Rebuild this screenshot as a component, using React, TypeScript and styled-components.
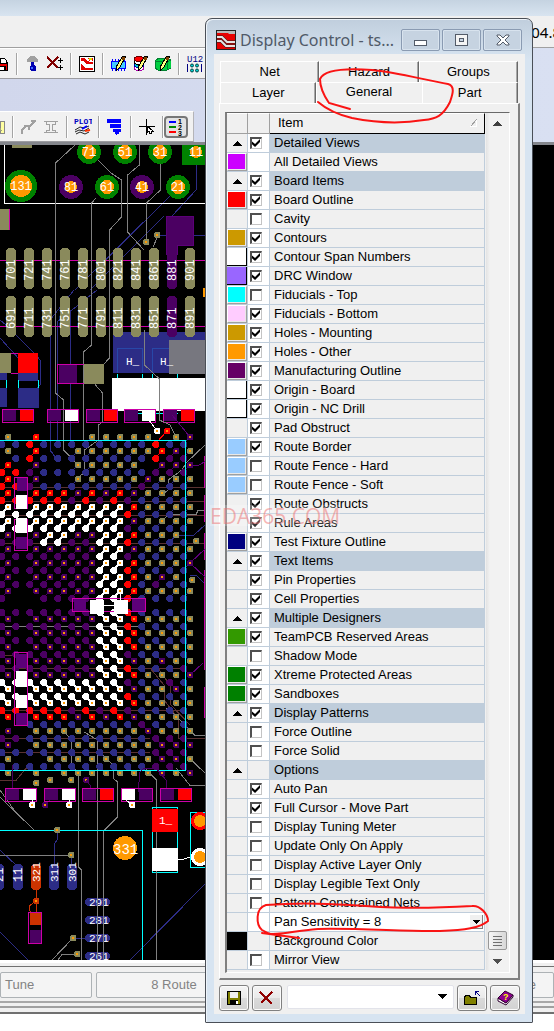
import React from "react";
import styled, { createGlobalStyle, css } from "styled-components";

const Global = createGlobalStyle`
  * { box-sizing: border-box; }
  body { margin: 0; background: #fff; font: 13px/16px "Liberation Sans", Arial, sans-serif; color: #000; overflow-x: hidden; }
  button, select, input { font: inherit; color: inherit; margin: 0; padding: 0; }
`;

const Desktop = styled.div`
  position: relative;
  overflow: hidden;
  padding-bottom: 18px;
`;

/* ---------- main application behind the dialog ---------- */
const AppTitle = styled.div`
  height: 16px;
  background: linear-gradient(#c5d3e1, #d8e4f0);
`;
const MenuBar = styled.div`
  height: 32px;
  display: flex;
  align-items: center;
  justify-content: flex-end;
  background: #f0f0f0;
  border-bottom: 1px solid #a0a0a0;
  font: 15px/20px "Noto Sans", sans-serif;
`;
const MenuText = styled.span`
  margin-right: -7px;
`;
const Dock = styled.div`
  background: linear-gradient(90deg, #d1d7ec, #d9e0f2);
  border-bottom: 3px solid #84868c;
`;
const Toolbar = styled.div<{ $w: number; $h: number }>`
  display: flex;
  align-items: center;
  width: ${(p) => p.$w}px;
  height: ${(p) => p.$h}px;
  background: #f1f1f1;
  border-top: 1px solid #fff;
  border-bottom: 1px solid #9c9ca0;
  border-right: 1px solid #b4b4b8;
`;
const DockGap = styled.div`
  height: 32px;
`;
const Group = styled.div<{ $first?: number; $flush?: boolean }>`
  display: flex;
  align-items: center;
  gap: 6px;
  padding: 0 ${(p) => (p.$first || p.$flush ? 0 : 7)}px;
  ${(p) => p.$first && css`width: ${p.$first}px;`}
  flex: none;
`;
const Sep = styled.span`
  flex: none;
  width: 2px;
  height: 22px;
  background: #a4a4a4;
  border-right: 1px solid #fff;
`;
const Tool = styled.button<{ $on?: boolean }>`
  flex: none;
  display: flex;
  align-items: center;
  justify-content: center;
  width: ${(p) => (p.$on ? 24 : 16)}px;
  height: ${(p) => (p.$on ? 22 : 20)}px;
  border: ${(p) => (p.$on ? "2px solid #777" : "0")};
  border-radius: 4px;
  background: ${(p) => (p.$on ? "#e2e2e2" : "transparent")};
  svg { flex: none; }
`;
const Canvas = styled.main`
  background: #000;
  overflow: hidden;
  svg { display: block; }
`;
const StatusBar = styled.footer`
  border-top: 3px solid #fff;
  background: #f0f0f0;
  padding-top: 3px;
`;
const StatusRow = styled.div`
  display: flex;
  gap: 4px;
  padding: 5px 0 3px;
  border-top: 1px solid #707070;
  border-bottom: 2px solid #a8a8a8;
`;
const StatusButton = styled.button<{ $w?: number; $side?: string }>`
  ${(p) => (p.$w ? css`width: ${p.$w}px; flex: none;` : css`flex: 1;`)}
  height: 26px;
  border: 1px solid #adb2b5;
  border-radius: 2px;
  background: #f4f4f4;
  color: #838383;
  text-align: ${(p) => p.$side || "center"};
  padding: 0 17px 0 4px;
`;
const StatusEdge = styled.div`
  height: 8px;
  margin-top: 3px;
  border-top: 2px solid #a0a0a0;
  border-bottom: 2px solid #707070;
`;

/* ---------- Display Control dialog ---------- */
const Dialog = styled.section`
  position: absolute;
  left: 205px;
  right: 21px;
  top: 18px;
  padding: 0 7px 8px 8px;
  border: 1px solid #4a4f57;
  border-radius: 7px 7px 1px 1px;
  background: linear-gradient(#c0cedd, #d7e4f1 40px, #d7e4f1);
  box-shadow: inset 1px 1px 0 #eef4fa;
`;
const Caption = styled.header`
  display: flex;
  align-items: center;
  gap: 2px;
  height: 35px;
  padding: 7px 3px 0 2px;
`;
const CaptionText = styled.h1`
  flex: 1;
  min-width: 0;
  margin: 0 0 0 2px;
  overflow: hidden;
  white-space: nowrap;
  font: 16px/22px "Noto Sans", sans-serif;
  color: #505a68;
`;
const CaptionButton = styled.button`
  flex: none;
  display: flex;
  align-items: center;
  justify-content: center;
  width: 39px;
  height: 22px;
  border: 1px solid #8a9bb2;
  border-radius: 2px;
  background: #c6d3e1;
  box-shadow: inset 0 0 0 1px #d8e3ee;
`;
const Client = styled.div`
  padding: 7px 5px 2px;
  background: #f0f0f0;
`;
const TabRow = styled.div`
  display: flex;
  height: 21px;
  padding: 0 2px 0 1px;
`;
const Tab = styled.button<{ $active?: boolean }>`
  flex: ${(p) => (p.$active ? "106 1 0" : "97 1 0")};
  border: 0;
  border-top: 1px solid #fff;
  border-left: 1px solid #fff;
  border-right: 1px solid ${(p) => (p.$active ? "#f0f0f0" : "#696969")};
  box-shadow: ${(p) => (p.$active ? "none" : "inset -1px 0 0 #a8a8a8")};
  background: #f0f0f0;
  line-height: 18px;
  padding-bottom: ${(p) => (p.$active ? 5 : 1)}px;
`;
const Panel = styled.div`
  padding: 8px 8px 5px 5px;
  border-top: 1px solid #fff;
  border-left: 1px solid #fff;
  border-right: 2px solid #808080;
  border-bottom: 2px solid #808080;
`;
const ListFrame = styled.div`
  display: flex;
  justify-content: space-between;
  padding-bottom: 2px;
  border-top: 1px solid #696969;
  border-left: 2px solid #808080;
  border-right: 1px solid #fff;
  border-bottom: 1px solid #fff;
`;
const ItemTable = styled.table`
  flex: 1;
  border-collapse: separate;
  border-spacing: 0;
  table-layout: fixed;
`;
const Head = styled.th<{ $w?: number }>`
  ${(p) => p.$w && css`width: ${p.$w}px;`}
  height: 21px;
  padding: 0 6px 2px 8px;
  text-align: left;
  font-weight: normal;
  background: #f0f0f0;
  border-right: 1px solid ${(p) => (p.$w ? "#a0a0a0" : "#000")};
  border-bottom: 1px solid ${(p) => (p.$w ? "#a0a0a0" : "#000")};
  border-top: 1px solid #fff;
`;
const HeadInner = styled.div`
  display: flex;
  align-items: center;
  justify-content: space-between;
`;
const Cell = styled.td<{ $bg?: string }>`
  height: 19px;
  padding: 0;
  background: ${(p) => p.$bg || "#f0f0f0"};
  border-right: 1px solid #bfcddb;
  border-bottom: 1px solid #bfcddb;
  white-space: nowrap;
  overflow: hidden;
  vertical-align: middle;
`;
const CellLabel = styled.label`
  display: block;
  height: 18px;
  padding-left: 4px;
  line-height: 18px;
`;
const Expander = styled.button`
  display: flex;
  width: 100%;
  height: 18px;
  align-items: center;
  justify-content: center;
  border: 0;
  background: transparent;
`;
const Swatch = styled.button<{ $c: string; $flat?: boolean }>`
  display: block;
  width: 100%;
  height: 18px;
  background: ${(p) => p.$c};
  border: 0 solid;
  ${(p) =>
    p.$flat
      ? css`border-color: #000; border-width: 0 1px 1px 0;`
      : css`border-color: #fff #a0a0a0 #a0a0a0 #fff; border-width: 1px; box-shadow: inset -1px -1px 0 #e8e8e8;`}
`;
const Check = styled.input`
  appearance: none;
  display: block;
  position: relative;
  width: 12px;
  height: 12px;
  margin-left: 2px;
  background: #fff;
  border: 1px solid #c4c4c4;
  border-top: 2px solid #505050;
  border-left: 2px solid #505050;
  &:checked::after {
    content: "";
    display: block;
    width: 8px;
    height: 8px;
    background: #000;
    clip-path: polygon(0 30%, 38% 62%, 100% 0, 100% 38%, 38% 100%, 0 66%);
  }
`;
const PanSelect = styled.select`
  appearance: none;
  flex: 1;
  height: 18px;
  padding-left: 4px;
  border: 0;
  background: transparent;
`;
const PanWrap = styled.div`
  display: flex;
  align-items: center;
`;
const DropMark = styled.span`
  display: flex;
  width: 13px;
  height: 14px;
  margin-right: 1px;
  align-items: center;
  justify-content: center;
  background: #f0f0f0;
  border-right: 1px solid #808080;
  border-bottom: 1px solid #808080;
`;
const Scroll = styled.div`
  display: flex;
  flex-direction: column;
  align-items: center;
  justify-content: space-between;
  width: 23px;
  margin-left: 1px;
  padding: 8px 2px 0 1px;
  background: linear-gradient(90deg, #e3e3e3, #f2f2f2 4px);
`;
const ScrollEnd = styled.div`
  display: flex;
  flex-direction: column;
  align-items: center;
  gap: 9px;
  padding-bottom: 6px;
`;
const Thumb = styled.button`
  display: flex;
  flex-direction: column;
  align-items: center;
  justify-content: center;
  gap: 2px;
  width: 19px;
  height: 19px;
  border: 1px solid #989898;
  border-radius: 2px;
  background: linear-gradient(90deg, #f6f6f6, #d8d8d8);
  i { width: 9px; height: 1px; background: #707070; }
`;
const Footer = styled.div`
  display: flex;
  align-items: center;
  gap: 3px;
  margin-top: 4px;
  height: 28px;
`;
const FootButton = styled.button`
  flex: none;
  display: flex;
  align-items: center;
  justify-content: center;
  width: 30px;
  height: 26px;
  border: 1px solid #808080;
  border-radius: 3px;
  background: linear-gradient(#f4f4f4, #e9e9e9 50%, #dadada 51%, #d2d2d2);
  box-shadow: inset 0 0 0 1px #fbfbfb;
`;
const SchemeWrap = styled.div`
  flex: 1;
  display: flex;
  align-items: center;
  height: 24px;
  margin: 0 0 3px 2px;
  padding-right: 6px;
  border: 1px solid #e2e3ea;
  border-radius: 2px;
  background: #fff;
`;
const SchemeSelect = styled.select`
  appearance: none;
  flex: 1;
  height: 20px;
  border: 0;
  background: transparent;
`;
const Markup = styled.svg`
  position: absolute;
  left: 0;
  top: 0;
  pointer-events: none;
`;
const Watermark = styled.div`
  position: absolute;
  left: 210px;
  top: 505px;
  height: 21px;
  font: 21px/22px "Open Sans", sans-serif;
  color: rgba(238, 110, 110, 0.5);
  background: rgba(255, 255, 255, 0.2);
  pointer-events: none;
`;

/* ---------- PCB drawing ---------- */
const C: Record<string, string> = {
  g: "#8a8a5c", r: "#ff0000", w: "#ffffff", p: "#4b0062", b: "#2c2c86",
};
const ringsTop = [
  "g.r...ggggg.gp", "g.r..ggggggrpg", "r.p..ggggg.ppp", "r.p..gggggpggg",
  "r.rrrprprpgggg", "w.wwwwwwwrgggg", "w.wwwwwwwpgggg", "p.pwwppwwrggg.",
  "p.pppppwwpgggg", "p.pppppwwrgggp", "p.pppppwwrgpg.", "p.pppppwwrgggg",
];
const padsTop = [
  "bbrbbbbbbbbrbb", ".brbbbbbbbbrpp", "rrpbbbbbbbbppp", "rrpbbbbbbbpbbb",
  "rrrrrprprpbbbb", "wwwwwwwwwrbbbb", "wwwwwwwwwpbbbb", "pppwwppwwrbbbb",
  "pppppppwwpbbbb", "pppppppwwrbbbb", "pppppppwwrbpbb", "p..ppppwwrbbbb",
];
const ringsLow = [
  "p.pppppwwrgggg", "p.pppppwwrgggg", "p.pppppwwrgggg", "p.pppppwwpgpgg",
  "p.pppppwwrgggp", "w.wwwwwwwpggpg", "w.wwwwwwwrgggg", "r.rrrprprpgggg",
  "p.ggggggggpggg", "p.gggggggggppp", "g..ggggggggppg", "g.g.gggggggpgp",
];
const padsLow = [
  "pppppppwwrbbbb", "pppppppwwrbbbb", "pppppppwwrbbbb", "pppppppwwpbbbb",
  "pppppppwwrbbbp", "wwwwwwwwwpbbpb", "wwwwwwwwwrbbbb", "rrrrrprprpbbbb",
  "..bbbbbbbbpbbb", "ppbbbbbbbbbppp", "bbbbbbbbbbbppp", "bbbbbbbbbbbppp",
];

const Pad = ({ x, y, c }: { x: number; y: number; c: string }) => (
  <path d={`M${x - 1} ${y - 3}h3l2 2v3l-2 2h-3l-2-2v-3z`} fill={c} />
);
const Via = ({ x, y, c }: { x: number; y: number; c: string }) => (
  <>
    <path d={`M${x - 2} ${y - 3}h4l1 1v4l-1 1h-4l-1-1v-4z`} fill={c} />
    <rect x={x - 1} y={y - 1} width="2" height="2" fill="#ff9900" />
  </>
);
const Matrix = ({ rings, pads, top, dir }: { rings: string[]; pads: string[]; top: number; dir: number }) => (
  <g>
    {rings.map((row, j) =>
      [...row].map((k, i) => {
        const x = 8 + 14 * i;
        const y = top + 14 * j;
        const pk = pads[j][i];
        return (
          <g key={`${i}-${j}`}>
            {pk !== "." && k !== "." && (
              <path d={`M${x} ${y}l-7 ${7 * dir}`} stroke={C[pk]} strokeWidth={pk === "w" ? 2 : 1} />
            )}
            {pk !== "." && <Pad x={x - 7} y={y + 7 * dir} c={C[pk]} />}
            {k !== "." && <Via x={x} y={y} c={C[k]} />}
          </g>
        );
      })
    )}
  </g>
);
const Part = ({ x, y, a, b }: { x: number; y: number; a: string; b: string }) => (
  <g>
    <rect x={x + 1} y={y + 1} width="13" height="11" fill={C[a]} />
    <rect x={x + 18} y={y + 1} width="13" height="11" fill={C[b]} />
    <rect x={x + 0.5} y={y + 0.5} width="31" height="13" fill="none" stroke="#cc00a8" />
  </g>
);
const Pin = ({ x, y, r, c, t, inner }: { x: number; y: number; r: number; c: string; t: string; inner: number }) => (
  <g>
    <circle cx={x} cy={y} r={r} fill={c} />
    <circle cx={x} cy={y} r={inner} fill="#ff9900" />
    <text x={x} y={y + 4} textAnchor="middle">{t}</text>
  </g>
);
const Finger = ({ x, y, h, c, t }: { x: number; y: number; h: number; c: string; t: string }) => (
  <g>
    <rect x={x - 5} y={y} width="10" height={h} rx="4" fill={c} />
    <text x={x + 4} y={y + h - 8} transform={`rotate(-90 ${x + 4} ${y + h - 8})`}>{t}</text>
  </g>
);

const fingerX = [11, 29, 47, 65, 83, 101, 118, 136, 154, 172, 190];

const Board = () => (
  <svg width="554" height="815" viewBox="0 145 554 815" shapeRendering="crispEdges" fontFamily="Liberation Mono, monospace" fontSize="12" fill="#fff" role="img" aria-label="Board layout">
    <g fill="none" stroke="#2c2c86">
      <path d="M170 196L75 290M196 163V190L172 216M164 216L90 290M159 235H206M74 290L50 320V440M97 290L57 322V440M70 310V440M0 320L12 330M0 338L20 360M16 335L34 353L40 360V385L34 393" />
      <path d="M0 850L18 867M57 830V840L54 845V865M71 855V866M0 932L28 960M206 883L130 960M76 938H86M172 540L176 535H194L206 524M190 575H196L206 585M50 430V450L56 458" />
    </g>
    <g fill="none" stroke="#5a3232">
      <path d="M0 487.500H206M0 501.500H206M0 515.500H206M0 543.500H206M0 655.500H28M0 668.500H185M0 710.500H185M0 738.500H150M0 752.500H150M0 780.500H16L28 766M150 668L164 685V700L178 718V738.500H206M158 668L170 685V704L190 725" />
    </g>
    <path d="M4.500 145V203.500H206" fill="none" stroke="#fff" />
    <path d="M0 260.500H206M0 326.500H206" stroke="#cc00a8" />
    <g fill="none" stroke="#808080">
      <path d="M75 145L55.500 163V393L63.500 400V450L78 465M98 160L111 173L121.500 180V217L109.500 230V358L95.500 373V385L102.500 393V422L98.500 425V440L84.500 450V472L78 478M96 198L91.500 203V345L83.500 352V440M139.500 145V165L127.500 175V232L144 250M160.500 163V190L146.500 203V240M157 238L153 247" />
      <path d="M206 444L186 463L182 470L168 480V490L162 495M206 510.500H198L196 514.500H168L164 519M0 626.500H140L145 622M64 732L71.500 740V765L78.500 773V867L81.500 870V960M84 732L97.500 740V960M98 750L113 765V778L117.500 782V817L103.500 831V960M142 765L156.500 780V960M186 755L206 774M176 768L190 785.500H206M166 708L176 716L195 735.500H206M0 790L14 810M0 797L34 830M0 855.500H71M52 960L73 938M58 960L62 954.500H77" />
    </g>
    <g stroke="#cc00a8" strokeWidth="2">
      <path d="M205 456V488M205 495V522M205 533V560M205 570V610M205 610V670M205 687V718" />
    </g>
    <rect x="0" y="209" width="9" height="21" fill="#8a8a5c" />
    <path d="M9.500 209V230" stroke="#cc00a8" />
    <path d="M166 216H193V245H177V254H166Z" fill="#4b0062" stroke="#5c0078" />
    <rect x="182" y="145" width="24" height="20" fill="#008200" />
    <Pin x={89} y={152} r={12} inner={7} c="#008200" t="71" />
    <Pin x={125} y={152} r={12} inner={7} c="#008200" t="51" />
    <Pin x={160} y={152} r={12} inner={7} c="#008200" t="31" />
    <Pin x={196} y={152} r={6} inner={6} c="#ff9900" t="11" />
    <Pin x={21} y={186} r={16} inner={11} c="#008200" t="131" />
    <Pin x={71} y={187} r={12} inner={6} c="#4b0062" t="81" />
    <Pin x={107} y={187} r={12} inner={7} c="#008200" t="61" />
    <Pin x={142} y={187} r={12} inner={6} c="#4b0062" t="41" />
    <Pin x={178} y={187} r={12} inner={7} c="#008200" t="21" />
    <rect x="12" y="145" width="20" height="3" fill="#8a8a5c" />
    <Via x={146} y={242} c={C.g} />
    <Via x={157} y={235} c={C.g} />
    <rect x="113" y="332" width="93" height="41" fill="#2c2c86" />
    <path d="M117.500 373V348.500H142.500V373M152.500 373V348.500H177.500V373" fill="none" stroke="#2848a8" />
    {fingerX.map((x, i) => (
      <React.Fragment key={x}>
        <Finger x={x} y={248} h={41} c={i === 9 ? C.p : C.g} t={String(701 + i * 20)} />
        <Finger x={x} y={296} h={41} c={i === 9 ? C.p : C.g} t={String(691 + i * 20)} />
      </React.Fragment>
    ))}
    <rect x="203" y="288" width="3" height="9" fill="#ff9900" />
    <rect x="169" y="340" width="37" height="34" fill="#77777f" />
    <text x="126" y="365" fontSize="11">H_</text>
    <text x="160" y="365" fontSize="11">H_</text>
    <path d="M117.500 374V378M142.500 374V378M152.500 374V378M177.500 374V378M128 413.500H178" stroke="#00ffff" />
    <rect x="112" y="378" width="94" height="33" fill="#fff" />
    <rect x="0" y="353" width="11" height="20" fill="#8a8a5c" />
    <path d="M11 353.500H18M11 373.500H18" stroke="#cc00a8" />
    <rect x="18" y="353" width="20" height="20" fill="#f00" />
    <path d="M18 373H38V381H18ZM18 388H39V408H18ZM0 373H7V380H0ZM0 388H7V407H0Z" fill="#2c2c86" />
    <path d="M6.500 380V388M18.500 380V388M38.500 380V388" stroke="#00ffff" />
    <rect x="59" y="365" width="18" height="18" fill="#4b0062" />
    <rect x="57.500" y="364.500" width="46" height="19" fill="none" stroke="#cc00a8" />
    <rect x="84" y="364" width="20" height="20" fill="#8a8a5c" />
    <Part x={2} y={409} a="p" b="r" />
    <Part x={47} y={409} a="p" b="w" />
    <Part x={86} y={409} a="p" b="r" />
    <Part x={124} y={409} a="p" b="w" />
    <Part x={163} y={409} a="p" b="r" />
    <path d="M144.500 330V365L159.500 379V420L170 425L176 437" fill="none" stroke="#808080" />
    <path d="M149 420L157 431" stroke="#fff" />
    <path d="M167 431L156 443" stroke="#f00" />
    <path d="M172 415L190 437M190 465H199L206 461M190 563L206 578M190 563L206 548M190 675L203 663" stroke="#5c0078" fill="none" />
    <Matrix rings={ringsTop} pads={padsTop} top={437} dir={1} />
    <Matrix rings={ringsLow} pads={padsLow} top={619} dir={-1} />
    <path d="M0 440.500H185.500V770.500H0" fill="none" stroke="#00ffff" />
    <Via x={157} y={431} c="#fff" />
    <Via x={167} y={431} c="#f00" />
    <Via x={196} y={541} c={C.g} />
    <Via x={192} y={580} c={C.g} />
    <path d="M17 478H27V491H17ZM16 537H27V549H16ZM74 599H86V611H74ZM132 599H145V611H132ZM16 654H27V668H16ZM16 713H27V725H16Z" fill="#5c0078" />
    <path d="M14.500 477.500H27.500V508.500H14.500ZM14.500 519.500H27.500V550.500H14.500ZM72.500 598.500H145.500V611.500H72.500ZM14.500 652.500H27.500V725.500H14.500Z" fill="none" stroke="#cc00a8" />
    <path d="M16 495H27V509H16ZM16 518H27V533H16ZM90 600H104V614H90ZM114 600H128V614H114ZM104 605H114V606H104ZM120 592H121V600H120ZM16 671H27V687H16ZM16 695H27V708H16Z" fill="#fff" />
    <Via x={36} y={783} c={C.g} />
    <Via x={50} y={780} c={C.g} />
    <Via x={71} y={780} c={C.g} />
    <Via x={86} y={780} c={C.p} />
    <path d="M12.500 765V790M86 780L90 785V792M50 800L45 805M138 792L140 772L144 768H156L166 780V790" fill="none" stroke="#4b0062" />
    <Part x={5} y={788} a="p" b="w" />
    <Part x={44} y={788} a="p" b="w" />
    <Part x={82} y={788} a="p" b="r" />
    <Part x={121} y={788} a="w" b="p" />
    <Part x={160} y={788} a="p" b="r" />
    <path d="M32 800V805M69 800V805M126 800L132 805" stroke="#fff" />
    <Via x={32} y={805} c="#fff" />
    <Via x={45} y={805} c={C.p} />
    <Via x={69} y={805} c="#fff" />
    <Via x={132} y={805} c="#fff" />
    <path d="M0 830.500H142.500V960" fill="none" stroke="#00ffff" />
    <Via x={57} y={830} c={C.g} />
    <Via x={71} y={855} c={C.g} />
    <circle cx="125" cy="848" r="12" fill="#ff9900" />
    <text x="113" y="854" fontSize="14">331</text>
    <rect x="152.500" y="807.500" width="25" height="65" fill="none" stroke="#00ffff" />
    <rect x="152" y="809" width="26" height="23" fill="#f00" />
    <rect x="152" y="848" width="26" height="23" fill="#fff" />
    <text x="159" y="824" fontSize="11">1_</text>
    <path d="M178 859H184L190 857" stroke="#fff" fill="none" />
    <path d="M206 812.500H190.500V867.500H206" fill="none" stroke="#00ffff" />
    <circle cx="200" cy="821" r="9" fill="#f00" />
    <circle cx="200" cy="821" r="6" fill="#ff9900" />
    <circle cx="200" cy="857" r="9" fill="#fff" />
    <circle cx="200" cy="857" r="6" fill="#ff9900" />
    <Finger x={-1} y={864} h={26} c={C.b} t="21" />
    <Finger x={18} y={864} h={26} c={C.b} t="11" />
    <path d="M36 890V912M36 901L29 906V910L32 913" stroke="#cc3300" fill="none" />
    <g fontSize="11">
      <Finger x={36} y={864} h={26} c="#cc3300" t="321" />
      <Finger x={54} y={864} h={26} c={C.b} t="311" />
      <Finger x={72} y={864} h={26} c={C.b} t="301" />
    </g>
    <Via x={36} y={901} c="#cc3300" />
    <rect x="30" y="912" width="11" height="13" fill="#cc3300" />
    <rect x="30" y="930" width="11" height="13" fill="#4b0062" />
    <rect x="28.500" y="912.500" width="13" height="31" fill="none" stroke="#cc00a8" />
    {[291, 281, 271, 261].map((n, i) => (
      <g key={n}>
        <rect x="85" y={898 + i * 18} width="25" height="8" rx="4" fill={C.b} />
        <text x="89" y={906 + i * 18} fontSize="11">{n}</text>
      </g>
    ))}
    <Via x={73} y={938} c={C.g} />
    <Via x={77} y={954} c={C.g} />
    <path d="M156.500 872V960M97.500 890V960M103.500 890V960" stroke="#808080" />
  </svg>
);

/* ---------- icons ---------- */
const Ico = ({ children, w = 16, h = 16 }: { children: React.ReactNode; w?: number; h?: number }) => (
  <svg width={w} height={h} viewBox={`0 0 ${w} ${h}`} shapeRendering="crispEdges" aria-hidden="true">{children}</svg>
);
const Pencil = () => (
  <g>
    <path d="M12 0h2v2l-5 9-3 3-1 0 0-3 5-8z" fill="#ffff80" stroke="#000" />
    <path d="M11 1h3v3h-3z" fill="#804000" />
  </g>
);
const BoardLogo = ({ s }: { s: number }) => (
  <svg width={s} height={s} viewBox="0 0 20 20" aria-hidden="true">
    <rect x="0.500" y="0.500" width="19" height="19" fill="#e80000" stroke="#222" />
    <path d="M1 1h18v3h-6l-1-1H1z" fill="#b8b8b8" />
    <path d="M1 7h5l5 5h8M1 11h4l5 5h9" stroke="#222" strokeWidth="3" fill="none" />
    <path d="M1 7h5l5 5h8M1 11h4l5 5h9" stroke="#e4e4e4" strokeWidth="2" fill="none" />
  </svg>
);
const Up = () => <Ico w={9} h={5}><path d="M4 0h1v1h1v1h1v1h1v1h1v1h-9v-1h1v-1h1v-1h1v-1h1z" /></Ico>;
const Down = ({ c = "#000" }: { c?: string }) => <Ico w={9} h={5}><path d="M0 0h9L4.500 5z" fill={c} /></Ico>;

/* ---------- list data ---------- */
type Item = { t: string; group?: boolean; c?: string; flat?: boolean; on?: boolean; box?: boolean; blank?: boolean; pan?: boolean };
const grp = (t: string): Item => ({ t, group: true, box: true, on: true });
const it = (t: string, on = true, c?: string, flat?: boolean): Item => ({ t, on, c, flat, box: true });
const items: Item[] = [
  grp("Detailed Views"),
  { t: "All Detailed Views", c: "#cc00ff", blank: true },
  grp("Board Items"),
  it("Board Outline", true, "#ff0000"),
  it("Cavity", false),
  it("Contours", true, "#cc9900"),
  it("Contour Span Numbers", true, "#ffffff", true),
  it("DRC Window", true, "#9966ff", true),
  it("Fiducials - Top", false, "#00ffff"),
  it("Fiducials - Bottom", true, "#ffccff"),
  it("Holes - Mounting", true, "#cc9900"),
  it("Holes - Other", true, "#ff9900"),
  it("Manufacturing Outline", true, "#660066"),
  it("Origin - Board", true, "#ffffff", true),
  it("Origin - NC Drill", true, "#ffffff", true),
  it("Pad Obstruct"),
  it("Route Border", true, "#99ccff"),
  it("Route Fence - Hard", false, "#99ccff"),
  it("Route Fence - Soft", false, "#99ccff"),
  it("Route Obstructs"),
  it("Rule Areas"),
  it("Test Fixture Outline", true, "#000080"),
  grp("Text Items"),
  it("Pin Properties"),
  it("Cell Properties"),
  grp("Multiple Designers"),
  it("TeamPCB Reserved Areas", true, "#339900"),
  it("Shadow Mode", false),
  it("Xtreme Protected Areas", true, "#008000"),
  it("Sandboxes", true, "#008000"),
  grp("Display Patterns"),
  it("Force Outline", false),
  it("Force Solid", false),
  { t: "Options", group: true },
  it("Auto Pan"),
  it("Full Cursor - Move Part"),
  it("Display Tuning Meter", false),
  it("Update Only On Apply", false),
  it("Display Active Layer Only", false),
  it("Display Legible Text Only", false),
  it("Pattern Constrained Nets", false),
  { t: "Pan Sensitivity = 8", pan: true, blank: true },
  { t: "Background Color", c: "#000000", flat: true },
  it("Mirror View", false),
];

const Row = ({ item, id }: { item: Item; id: string }) => (
  <tr>
    <Cell>
      {item.group && <Expander aria-label={`Collapse ${item.t}`}><Up /></Expander>}
      {item.c && <Swatch $c={item.c} $flat={item.flat} aria-label={`${item.t} color`} />}
    </Cell>
    <Cell $bg={item.box || item.blank ? "#fff" : undefined}>
      {item.box && <Check type="checkbox" id={id} defaultChecked={item.on} />}
    </Cell>
    <Cell $bg={item.group ? "#bfcddb" : item.pan ? "#fff" : undefined}>
      {item.pan ? (
        <PanWrap>
          <PanSelect aria-label="Pan Sensitivity"><option>{item.t}</option></PanSelect>
          <DropMark><Ico w={7} h={4}><path d="M0 0h7L3.500 4z" /></Ico></DropMark>
        </PanWrap>
      ) : (
        <CellLabel htmlFor={item.box ? id : undefined}>{item.t}</CellLabel>
      )}
    </Cell>
  </tr>
);

export default function App() {
  return (
    <Desktop>
      <Global />
      <AppTitle />
      <MenuBar><MenuText>04.8</MenuText></MenuBar>
      <Dock>
        <Toolbar $w={215} $h={31}>
          <Group $first={16}>
            <Tool aria-label="Save"><Ico><path d="M0 5h7l1 2v8H0z" fill="#000" /><path d="M0 8h7v2H0zM6 10h1v4H6z" fill="#e00" /><path d="M0 2h4l2 2v3H0z" fill="#fff" stroke="#000" /><path d="M0 11h4v3H0z" fill="#fff" /></Ico></Tool>
          </Group>
          <Sep />
          <Group>
            <Tool aria-label="Highlight"><Ico><path d="M5 0h5l3 4v2H2V4z" fill="#a0a0a0" /><path d="M6 6h3v3l2 2v3l-1 1H6l-1-1v-3l1-2z" fill="#0000b0" /><path d="M6 11h2v2H6z" fill="#3c6cff" /></Ico></Tool>
            <Tool aria-label="Clear selection"><Ico><path d="M0 1l11 11M11 1L0 12" stroke="#800000" strokeWidth="2" /><path d="M11 4.500h5M13.500 2v5M11 11.500h5M13.500 9v5" stroke="#000" /></Ico></Tool>
          </Group>
          <Sep />
          <Group><Tool aria-label="Display control"><Ico><rect x="0.500" y="0.500" width="15" height="15" fill="#fff" stroke="#000" /><path d="M2 2h3l4 4h5v2H8L4 5H2zM2 8l5 4h7v2H2z" fill="#e00000" /><path d="M8 7l4-4M9 2h4v3" stroke="#e00" fill="none" /><path d="M10 2h3v2h-3z" fill="#dd0" /></Ico></Tool></Group>
          <Sep />
          <Group>
            <Tool aria-label="Edit parts"><Ico><path d="M1.500 3v12M4.500 3v12M7.500 3v12M10.500 3v12M13.500 3v12" stroke="#00f" /><rect x="0.500" y="5.500" width="14" height="7" fill="#4cf" stroke="#00f" /><Pencil /></Ico></Tool>
            <Tool aria-label="Edit layers"><Ico><ellipse cx="6" cy="12" rx="5" ry="2.500" fill="#fff" stroke="#a0a" /><ellipse cx="6" cy="9" rx="5" ry="2.500" fill="#0cc" stroke="#00a" /><ellipse cx="6" cy="6" rx="5" ry="2.500" fill="#fff" stroke="#000" /><ellipse cx="6" cy="3" rx="5" ry="2.500" fill="#f00" stroke="#600" /><Pencil /></Ico></Tool>
            <Tool aria-label="Edit board"><Ico><path d="M0 5l4-3h8l4 2v8l-4 2H3l-3-2z" fill="#00d040" stroke="#008030" /><path d="M0 5l12 1v8M12 6l4-2" stroke="#008030" fill="none" /><Pencil /></Ico></Tool>
          </Group>
          <Sep />
          <Group>
            <Tool aria-label="Reference designator U12">
              <svg width="18" height="18" viewBox="0 0 18 18" fontFamily="Liberation Mono, monospace" fontSize="9" fill="#000080">
                <text x="1" y="7">U12</text><path d="M1 9h1v8H1zM15 9h1v8h-1z" /><g fill="#0cc" stroke="#044"><circle cx="6" cy="10.500" r="1.500" /><circle cx="11" cy="10.500" r="1.500" /><circle cx="6" cy="15.500" r="1.500" /><circle cx="11" cy="15.500" r="1.500" /></g>
              </svg>
            </Tool>
          </Group>
        </Toolbar>
        <DockGap />
        <Toolbar $w={194} $h={31}>
          <Group $first={12}><Tool aria-label="Fill"><Ico><path d="M0 2h4v12H0z" fill="#ffffa0" stroke="#888" /><path d="M0 8l2 4H0z" fill="#a0a080" /></Ico></Tool></Group>
          <Sep />
          <Group>
            <Tool aria-label="Route"><Ico><path d="M1 15v-4l4-4h4l5-5M10 2h5M3 7h3M8 6v5" stroke="#a0a0a0" strokeWidth="2" fill="none" /></Ico></Tool>
            <Tool aria-label="Tune shape"><Ico><path d="M1 2.500h14M1 13.500h14M3.500 2v3h3v6h-3v3M12.500 2v3h-3v6h3v3" stroke="#a0a0a0" fill="none" /></Ico></Tool>
          </Group>
          <Sep />
          <Group>
            <Tool aria-label="Plot">
              <svg width="18" height="19" viewBox="0 0 18 19" aria-hidden="true"><text x="0" y="7" fontFamily="Liberation Mono, monospace" fontSize="8" fontWeight="bold" fill="#0000c0">PLOT</text><path d="M1 13l5-3 4 1 5-2M1 15l4-2 5 1 5-3M2 17l4-2 5 2 4-2" stroke="#222" fill="none" /><path d="M8 12l5-3" stroke="#00f" strokeWidth="2" /><path d="M11 14l5-1" stroke="#f30" strokeWidth="2" /></svg>
            </Tool>
          </Group>
          <Sep />
          <Group><Tool aria-label="Align"><Ico><path d="M0 0h14v4H0zM3 5h11v4H3zM6 10h8v3h-2v2h-2v1h-1v-1H8v-2H6z" fill="#0000ff" /></Ico></Tool></Group>
          <Sep />
          <Group><Tool aria-label="Crosshair"><Ico><path d="M7.500 0v16M0 7.500h16" stroke="#000" /><path d="M8 7v7l2-2 1 3 2-1-1-2h2z" fill="#fff" stroke="#000" /></Ico></Tool></Group>
          <Sep />
          <Group $flush>
            <Tool $on aria-label="Numbered layers">
              <svg width="18" height="18" viewBox="0 0 18 18" fontFamily="Liberation Sans, sans-serif" fontSize="7" fontWeight="bold">
                <path d="M2 4h7" stroke="#00f" strokeWidth="2" /><path d="M2 9h7" stroke="#080" strokeWidth="2" /><path d="M2 14h7" stroke="#f00" strokeWidth="2" /><text x="11" y="6">1</text><text x="11" y="12">2</text><text x="11" y="18">3</text>
              </svg>
            </Tool>
          </Group>
        </Toolbar>
      </Dock>
      <Canvas><Board /></Canvas>
      <StatusBar>
        <StatusRow>
          <StatusButton $w={92} $side="left">Tune</StatusButton>
          <StatusButton $w={169}>8 Route</StatusButton>
          <StatusButton $side="right">e</StatusButton>
        </StatusRow>
        <StatusEdge />
      </StatusBar>

      <Dialog aria-label="Display Control">
        <Caption>
          <BoardLogo s={20} />
          <CaptionText>Display Control - ts...</CaptionText>
          <CaptionButton aria-label="Minimize"><Ico w={14} h={14}><rect x="0.500" y="7.500" width="12" height="5" rx="1" fill="#fff" stroke="#535b68" /></Ico></CaptionButton>
          <CaptionButton aria-label="Maximize"><Ico w={13} h={12}><rect x="0.500" y="0.500" width="12" height="11" fill="#f4f4f4" stroke="#535b68" /><rect x="4.500" y="4.500" width="4" height="3" fill="#c6d3e1" stroke="#535b68" /></Ico></CaptionButton>
          <CaptionButton aria-label="Close"><svg width="14" height="12" viewBox="0 0 14 12" aria-hidden="true"><path d="M1 1h3l3 3 3-3h3v1L9 6l4 4v1h-3L7 8l-3 3H1v-1l4-4-4-4z" fill="#fff" stroke="#535b68" /></svg></CaptionButton>
        </Caption>
        <Client>
          <TabRow><Tab>Net</Tab><Tab>Hazard</Tab><Tab>Groups</Tab></TabRow>
          <TabRow><Tab>Layer</Tab><Tab $active>General</Tab><Tab>Part</Tab></TabRow>
          <Panel>
            <ListFrame>
              <ItemTable>
                <thead>
                  <tr>
                    <Head $w={21} aria-label="Color" />
                    <Head $w={22} aria-label="Visible" />
                    <Head><HeadInner>Item<Ico w={8} h={8}><path d="M0.500 7.500L6.500 0.500" stroke="#a0a0a0" /><path d="M6.500 0.500V7.500H0" stroke="#fff" fill="none" /></Ico></HeadInner></Head>
                  </tr>
                </thead>
                <tbody>
                  {items.map((item, i) => <Row key={item.t} item={item} id={`item-${i}`} />)}
                </tbody>
              </ItemTable>
              <Scroll>
                <Ico w={9} h={5}><path d="M4.500 0L9 5H0z" fill="#404040" /></Ico>
                <ScrollEnd><Thumb aria-label="Scroll"><i /><i /><i /><i /></Thumb><Down c="#505050" /></ScrollEnd>
              </Scroll>
            </ListFrame>
          </Panel>
          <Footer>
            <FootButton aria-label="Save scheme"><Ico><path d="M1 1h14v14H1z" fill="#000" /><path d="M2 2h2v6h8V2h2v12h-2v-4H4v4H2z" fill="#808000" /><path d="M4 2h8v6H4z" fill="#f0f0f0" /><path d="M10 11h2v3h-2z" fill="#fff" /></Ico></FootButton>
            <FootButton aria-label="Delete scheme"><Ico><path d="M1 2l12 12M13 2L2 13" stroke="#900000" strokeWidth="2" /></Ico></FootButton>
            <SchemeWrap><SchemeSelect aria-label="Scheme"><option></option></SchemeSelect><Down /></SchemeWrap>
            <FootButton aria-label="Open scheme"><Ico><path d="M0.500 7.500l1-2h4l1 2h6v7h-12z" fill="#808000" stroke="#000" /><path d="M11 1.500h4M11.500 1v4M12 2l4 4" stroke="#000080" fill="none" /></Ico></FootButton>
            <FootButton aria-label="Help"><svg width="17" height="16" viewBox="0 0 17 16" fontFamily="Liberation Sans, sans-serif"><path d="M1 8v3l8 4 7-8V5l-7 8z" fill="#fff" stroke="#300030" /><path d="M1 8L8 1l8 4-7 8z" fill="#900090" stroke="#300030" /><text x="6" y="10" fontSize="9" fontWeight="bold" fill="#ffff00">?</text></svg></FootButton>
          </Footer>
        </Client>
      </Dialog>

      <Watermark>EDA365.COM</Watermark>
      <Markup width="554" height="1031" viewBox="0 0 554 1031" fill="none" stroke="#fa1414" strokeWidth="2" strokeLinecap="round" aria-hidden="true">
        <path d="M350 109L329 103Q320 90 320 79C324 70 345 68 372 70C395 72 425 80 448 84C456 86 452 96 450 102C443 116 436 119 424 120C400 124 372 122 352 118C335 114 325 108 318 102" />
        <path d="M299 938L262 933M262 933C280 936 290 931 318 929C360 928 410 932 440 931C465 930 480 928 488 921C488 914 480 905 472 906C420 909 390 908 350 905C320 903 290 903 266 905C255 908 256 925 262 930C270 935 280 936 285 936" />
      </Markup>
    </Desktop>
  );
}
